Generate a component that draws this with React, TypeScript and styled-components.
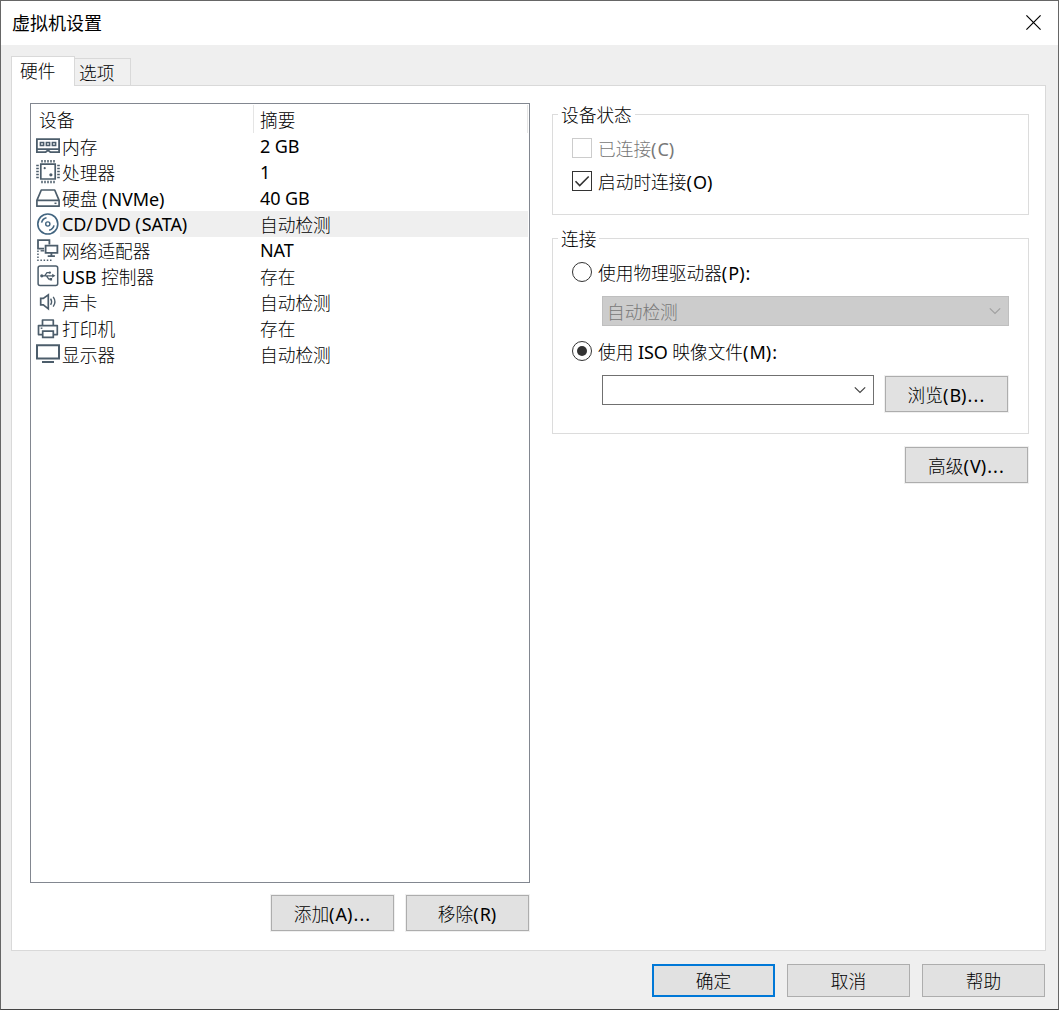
import React from 'react';
import styled, { createGlobalStyle, css } from 'styled-components';

const GlobalStyle = createGlobalStyle`
  * { box-sizing: border-box; }
  html, body { margin: 0; padding: 0; }
  body { background: #efefef; overflow: hidden; }
`;

const Window = styled.div`
  width: 1059px;
  height: 1010px;
  display: flex;
  flex-direction: column;
  background: #efefef;
  border: 1px solid #666;
  border-bottom-color: #444;
  font-family: 'Noto Sans', 'Noto Sans CJK SC', sans-serif;
  font-size: 18px;
  color: #000;
  user-select: none;
`;

const TitleBar = styled.header`
  flex: none;
  height: 44px;
  padding: 0 17px 1px 11px;
  display: flex;
  align-items: center;
  justify-content: space-between;
  background: #fff;
`;

const Title = styled.h1`
  margin: 0;
  padding-bottom: 1px;
  font: 400 18px/24px 'Noto Sans CJK SC', sans-serif;
`;

const CloseButton = styled.button`
  display: flex;
  padding: 0;
  border: 0;
  background: none;
`;

const Han = styled.span`
  font-family: 'Noto Sans CJK SC', sans-serif;
  font-weight: 300;
  font-size: 17.7px;
  line-height: 20px;
`;

const Latin = styled.span<{ $loose?: boolean }>`
  font-family: 'Noto Sans', sans-serif;
  font-size: 18px;
  line-height: 20px;
  letter-spacing: ${(p) => (p.$loose ? '1.1px' : '-0.1px')};
`;

const Line = styled.span<{ $muted?: boolean }>`
  display: block;
  height: 20px;
  line-height: 20px;
  white-space: pre;
  color: ${(p) => (p.$muted ? '#787878' : '#000')};
`;

function Label({ children, muted }: { children: string; muted?: boolean }) {
  const runs = children.match(/[\u4e00-\u9fff]+|[()/.:]+|[^\u4e00-\u9fff()/.:]+/g) ?? [];
  return (
    <Line $muted={muted}>
      {runs.map((run, i) =>
        /[\u4e00-\u9fff]/.test(run) ? (
          <Han key={i}>{run}</Han>
        ) : (
          <Latin key={i} $loose={/[()/.:]/.test(run)}>
            {run}
          </Latin>
        )
      )}
    </Line>
  );
}

const TabStrip = styled.nav`
  flex: none;
  height: 40px;
  padding: 0 0 0 10px;
  display: flex;
  align-items: flex-end;
`;

const Tab = styled.div<{ $active?: boolean }>`
  display: flex;
  border: 1px solid #d9d9d9;
  border-bottom: 0;
  ${(p) =>
    p.$active
      ? css`
          width: 64px;
          height: 30px;
          margin-bottom: -1px;
          padding: 3px 0 0 8px;
          background: #fff;
          z-index: 1;
        `
      : css`
          width: 56px;
          height: 27px;
          padding: 3px 0 0 4px;
          border-left: 0;
          background: #f0f0f0;
        `}
`;

const Panel = styled.main`
  flex: none;
  width: 1035px;
  height: 866px;
  margin-left: 10px;
  padding: 17px 16px 0 18px;
  display: flex;
  justify-content: space-between;
  background: #fff;
  border: 1px solid #d9d9d9;
`;

const DeviceColumn = styled.section`
  width: 500px;
  display: flex;
  flex-direction: column;
  gap: 12px;
`;

const DeviceList = styled.div`
  height: 780px;
  border: 1px solid #828790;
  background: #fff;
`;

const ListHeader = styled.div`
  height: 29px;
  padding: 1px 1px 0 0;
  display: flex;
`;

const HeaderCell = styled.div<{ $width: number; $indent: number }>`
  width: ${(p) => p.$width}px;
  height: 28px;
  padding: 4px 0 0 ${(p) => p.$indent}px;
  border-right: 1px solid #e5e5e5;
`;

const Row = styled.div`
  height: 26px;
  padding: 0 1px 0 5px;
  display: flex;
`;

const RowBody = styled.div<{ $selected?: boolean }>`
  flex: 1;
  display: grid;
  grid-template-columns: 198px 1fr;
  padding: 3px 0 0 2px;
  background: ${(p) => (p.$selected ? '#efefef' : 'transparent')};
`;

const ButtonRow = styled.div`
  display: flex;
  justify-content: flex-end;
  gap: 12px;
`;

const PushButton = styled.button<{ $tall?: boolean; $primary?: boolean }>`
  flex: none;
  width: 123px;
  height: ${(p) => (p.$tall ? 36 : 33)}px;
  padding: ${(p) => (p.$tall ? '0' : '0 0 1px')};
  display: flex;
  align-items: center;
  justify-content: center;
  background: #e1e1e1;
  border: ${(p) => (p.$primary ? '2px solid #0078d7' : '1px solid #adadad')};
  box-shadow: ${(p) => (p.$tall ? '0 0 0 1px #f0f0f0' : 'none')};
`;

const ListButtons = styled(ButtonRow)`
  padding-right: 1px;
`;

const Settings = styled.section`
  width: 477px;
  padding-top: 11px;
  display: flex;
  flex-direction: column;
  gap: 23px;
`;

const Group = styled.section<{ $height: number }>`
  height: ${(p) => p.$height}px;
  padding: 0 19px;
  border: 1px solid #dcdcdc;
  display: flex;
  flex-direction: column;
  align-items: flex-start;
`;

const Legend = styled.div`
  margin: -11px 0 0 -14px;
  padding: 0 3px;
  height: 20px;
  background: #fff;
`;

const Choice = styled.div<{ $top: number }>`
  margin-top: ${(p) => p.$top}px;
  height: 20px;
  display: flex;
  gap: 6px;
`;

const CheckBox = styled.span<{ $muted?: boolean }>`
  width: 20px;
  height: 20px;
  display: flex;
  border: 1px solid ${(p) => (p.$muted ? '#ccc' : '#333')};
`;

const Radio = styled.span`
  width: 20px;
  height: 20px;
  display: grid;
  place-items: center;
  border: 1px solid #333;
  border-radius: 50%;
`;

const RadioDot = styled.span`
  width: 10px;
  height: 10px;
  border-radius: 50%;
  background: #333;
`;

const Combo = styled.div<{ $muted?: boolean }>`
  width: ${(p) => (p.$muted ? 407 : 272)}px;
  height: 30px;
  padding: 0 7px 0 4px;
  display: flex;
  align-items: center;
  justify-content: space-between;
  background: ${(p) => (p.$muted ? '#ccc' : '#fff')};
  border: 1px solid ${(p) => (p.$muted ? '#bfbfbf' : '#707070')};
`;

const ComboRow = styled.div<{ $top: number }>`
  margin: ${(p) => p.$top}px 0 0 30px;
  display: flex;
  gap: 11px;
`;

const BrowseSlot = styled.div`
  padding-top: 1px;
`;

const AdvancedRow = styled(ButtonRow)`
  margin-top: -10px;
  padding-right: 1px;
`;

const Footer = styled.footer`
  padding: 13px 13px 0 0;
`;

const Glyph = styled.svg`
  flex: none;
  display: block;
`;

function Chevron({ color }: { color: string }) {
  return (
    <Glyph width="12" height="8" viewBox="0 0 12 8" fill="none" stroke={color} strokeWidth="1.2">
      <path d="M.8 1.3 6 6.5l5.2-5.2" />
    </Glyph>
  );
}

const ink = '#4c5d6b';
const discInk = '#426580';

const icons: Record<string, React.ReactNode> = {
  memory: (
    <>
      <path d="M.9 6.2h22.2v10H.9zM.9 16v3.2h8.7l2.4-2 2.4 2h8.7V16" strokeWidth="1.8" />
      <path d="M4.4 9.5h3.2v3H4.4zM10.4 9.5h3.2v3h-3.2zM16.4 9.5h3.2v3h-3.2z" strokeWidth="1.6" />
    </>
  ),
  cpu: (
    <>
      <path d="M4.8 5.2h14.4v14.8H4.8z" strokeWidth="1.7" />
      <path d="M6 1v2.4M9 1v2.4M12 1v2.4M15 1v2.4M18 1v2.4M6 21.8v2.4M9 21.8v2.4M12 21.8v2.4M15 21.8v2.4M18 21.8v2.4M.2 6.6h2.6M.2 9.6h2.6M.2 12.6h2.6M.2 15.6h2.6M.2 18.6h2.6M21.2 6.6h2.6M21.2 9.6h2.6M21.2 12.6h2.6M21.2 15.6h2.6M21.2 18.6h2.6" strokeWidth="1.5" />
      <circle cx="8.7" cy="9.2" r="1.1" fill={ink} stroke="none" />
      <circle cx="14.9" cy="15.8" r="1.6" fill={ink} stroke="none" />
    </>
  ),
  disk: (
    <>
      <path d="M.9 15.4 5.3 5h13.4l4.4 10.4v5.8H.9zM.9 15.4h22.2" strokeWidth="1.7" strokeLinejoin="round" />
      <path d="M18.5 18.3h2" strokeWidth="1.5" />
    </>
  ),
  disc: (
    <g stroke={discInk}>
      <circle cx="11.8" cy="13" r="10" strokeWidth="1.6" />
      <circle cx="11.8" cy="13" r="2.1" strokeWidth="1.4" />
      <path d="M5.6 11.6c.6-2.6 2.3-4.2 4.9-4.8M18 14.4c-.6 2.6-2.3 4.2-4.9 4.8" strokeWidth="1.6" />
    </g>
  ),
  network: (
    <>
      <path d="M8 11.6H2V3.2h11.4v4.2" strokeWidth="1.8" />
      <path d="M9.6 8.6h11.8v7.2H9.6zM15.4 16v3M11.7 19.2h7.2" strokeWidth="1.8" />
      <path d="M4.6 13.8h3.6" strokeWidth="1.4" />
      <path d="M1.2 14.2h1.5M1.2 17.2h1.5M1.2 20.2h1.5M1.2 23.2h1.5M4.4 23.2h1.5M7.6 23.2h1.5M10.8 23.2h1.5M14 23.2h1.5" strokeWidth="1.4" />
    </>
  ),
  usb: (
    <>
      <rect x="2.1" y="3" width="19.6" height="19.6" rx="2" strokeWidth="1.5" />
      <path d="M6 12.8h11M8.6 12.8l2.4-3.2h2.6M10.4 12.8l2.4 3.4h2" strokeWidth="1.3" />
      <circle cx="5.8" cy="12.8" r="1.6" fill={ink} stroke="none" />
      <circle cx="13.8" cy="9.6" r="1.2" fill={ink} stroke="none" />
      <path d="m16.2 10.8 3.2 2-3.2 2zM13.7 15h2.4v2.4h-2.4z" fill={ink} stroke="none" />
    </>
  ),
  sound: (
    <>
      <path d="M4.7 9.4h2.6l5-3.6v14l-5-3.9H4.7z" strokeWidth="1.7" />
      <path d="M14.6 9.6q2 3.1 0 6.2M17.2 7.8q3.4 4.9 0 9.8" strokeWidth="1.4" />
    </>
  ),
  printer: (
    <>
      <path d="M6.5 10.6V5h10.8v5.6M6.2 19.6H2.5v-9h18.8v9h-3.5" strokeWidth="1.7" strokeLinejoin="round" />
      <path d="M6.7 16.2h10.6v6.2H6.7z" strokeWidth="1.7" />
      <path d="M4.7 13.2h1.7" strokeWidth="1.4" />
    </>
  ),
  display: (
    <>
      <path d="M1 4.3h22v13.2H1z" strokeWidth="2" />
      <path d="M6 21h12" strokeWidth="2" />
    </>
  ),
};

function DeviceIcon({ name }: { name: string }) {
  return (
    <Glyph width="24" height="26" viewBox="0 0 24 26" fill="none" stroke={ink}>
      {icons[name]}
    </Glyph>
  );
}

const devices = [
  { icon: 'memory', name: '内存', summary: '2 GB' },
  { icon: 'cpu', name: '处理器', summary: '1' },
  { icon: 'disk', name: '硬盘 (NVMe)', summary: '40 GB' },
  { icon: 'disc', name: 'CD/DVD (SATA)', summary: '自动检测', selected: true },
  { icon: 'network', name: '网络适配器', summary: 'NAT' },
  { icon: 'usb', name: 'USB 控制器', summary: '存在' },
  { icon: 'sound', name: '声卡', summary: '自动检测' },
  { icon: 'printer', name: '打印机', summary: '存在' },
  { icon: 'display', name: '显示器', summary: '自动检测' },
];

export default function App() {
  return (
    <>
      <GlobalStyle />
      <Window>
        <TitleBar>
          <Title>虚拟机设置</Title>
          <CloseButton aria-label="关闭">
            <Glyph width="15" height="15" viewBox="0 0 15 15" stroke="#000" strokeWidth="1.2">
              <path d="m.4.4 14.2 14.2M14.6.4.4 14.6" />
            </Glyph>
          </CloseButton>
        </TitleBar>
        <TabStrip>
          <Tab $active>
            <Label>硬件</Label>
          </Tab>
          <Tab>
            <Label>选项</Label>
          </Tab>
        </TabStrip>
        <Panel>
          <DeviceColumn>
            <DeviceList>
              <ListHeader>
                <HeaderCell $width={223} $indent={8}>
                  <Label>设备</Label>
                </HeaderCell>
                <HeaderCell $width={274} $indent={6}>
                  <Label>摘要</Label>
                </HeaderCell>
              </ListHeader>
              {devices.map((d) => (
                <Row key={d.icon}>
                  <DeviceIcon name={d.icon} />
                  <RowBody $selected={d.selected}>
                    <Label>{d.name}</Label>
                    <Label>{d.summary}</Label>
                  </RowBody>
                </Row>
              ))}
            </DeviceList>
            <ListButtons>
              <PushButton $tall>
                <Label>添加(A)...</Label>
              </PushButton>
              <PushButton $tall>
                <Label>移除(R)</Label>
              </PushButton>
            </ListButtons>
          </DeviceColumn>
          <Settings>
            <Group $height={101}>
              <Legend>
                <Label>设备状态</Label>
              </Legend>
              <Choice $top={14}>
                <CheckBox $muted />
                <Label muted>已连接(C)</Label>
              </Choice>
              <Choice $top={13}>
                <CheckBox>
                  <Glyph width="18" height="18" viewBox="0 0 18 18" fill="none" stroke="#333" strokeWidth="1.6">
                    <path d="m2.5 9.2 4.2 4.3 9-9" />
                  </Glyph>
                </CheckBox>
                <Label>启动时连接(O)</Label>
              </Choice>
            </Group>
            <Group $height={196}>
              <Legend>
                <Label>连接</Label>
              </Legend>
              <Choice $top={14}>
                <Radio />
                <Label>使用物理驱动器(P):</Label>
              </Choice>
              <ComboRow $top={14}>
                <Combo $muted>
                  <Label muted>自动检测</Label>
                  <Chevron color="#a0a0a0" />
                </Combo>
              </ComboRow>
              <Choice $top={15}>
                <Radio>
                  <RadioDot />
                </Radio>
                <Label>使用 ISO 映像文件(M):</Label>
              </Choice>
              <ComboRow $top={14}>
                <Combo>
                  <span />
                  <Chevron color="#444" />
                </Combo>
                <BrowseSlot>
                  <PushButton $tall>
                    <Label>浏览(B)...</Label>
                  </PushButton>
                </BrowseSlot>
              </ComboRow>
            </Group>
            <AdvancedRow>
              <PushButton $tall>
                <Label>高级(V)...</Label>
              </PushButton>
            </AdvancedRow>
          </Settings>
        </Panel>
        <Footer>
          <ButtonRow>
            <PushButton $primary>
              <Label>确定</Label>
            </PushButton>
            <PushButton>
              <Label>取消</Label>
            </PushButton>
            <PushButton>
              <Label>帮助</Label>
            </PushButton>
          </ButtonRow>
        </Footer>
      </Window>
    </>
  );
}
